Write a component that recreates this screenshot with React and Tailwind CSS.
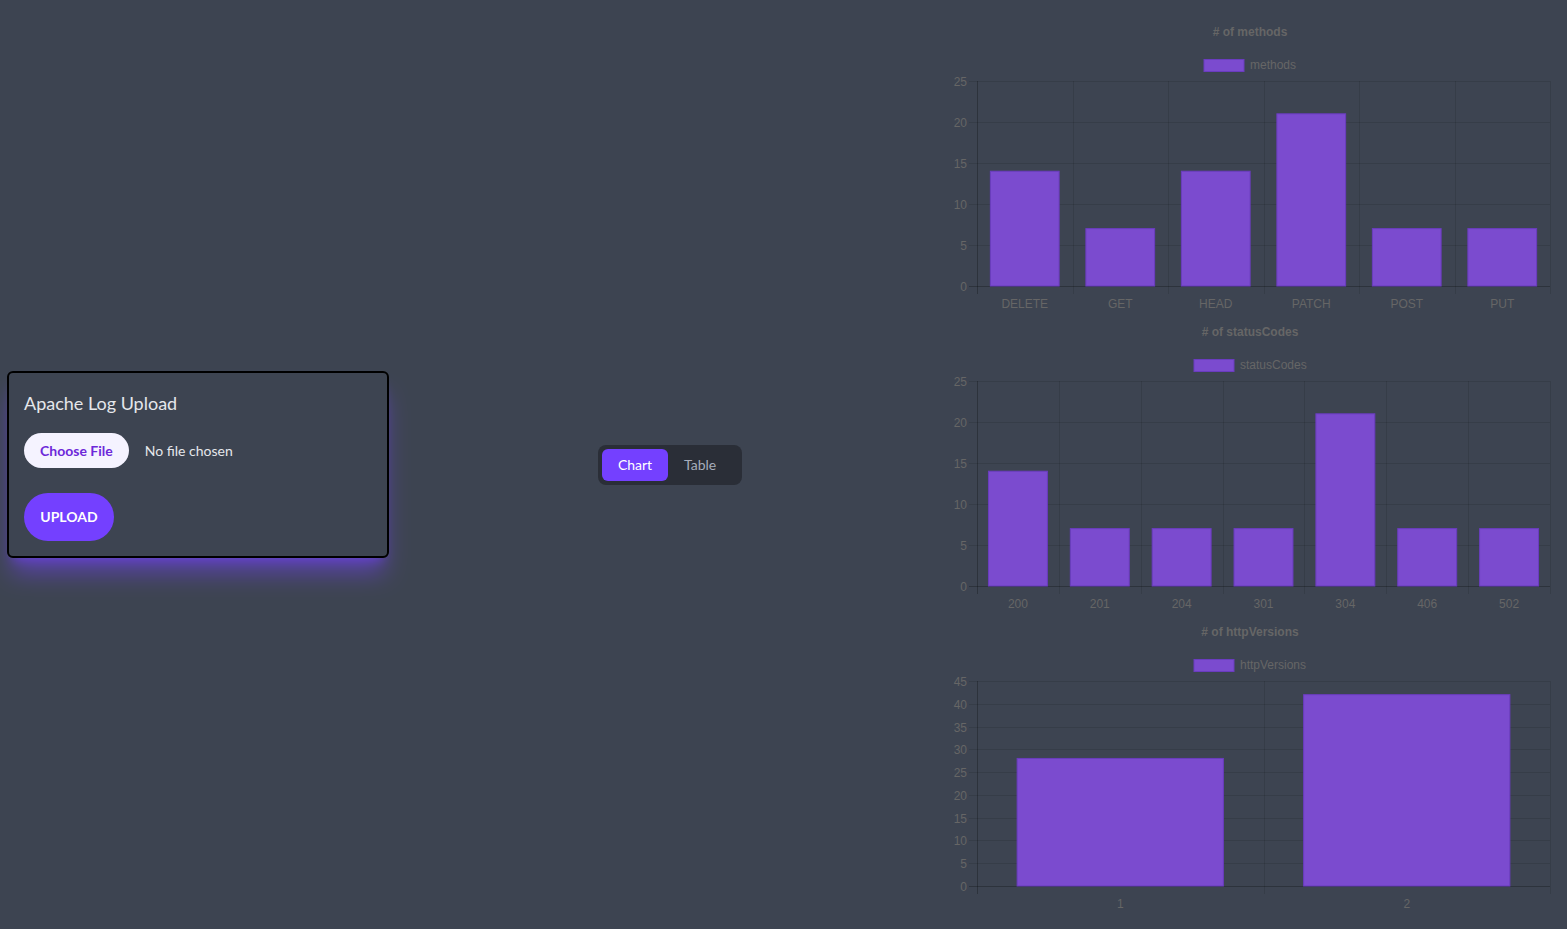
const charts = [
  { title: '# of methods', label: 'methods', labels: ['DELETE', 'GET', 'HEAD', 'PATCH', 'POST', 'PUT'], data: [14, 7, 14, 21, 7, 7], max: 25, legendX: 264 },
  { title: '# of statusCodes', label: 'statusCodes', labels: ['200', '201', '204', '301', '304', '406', '502'], data: [14, 7, 7, 7, 21, 7, 7], max: 25, legendX: 254 },
  { title: '# of httpVersions', label: 'httpVersions', labels: ['1', '2'], data: [28, 42], max: 45, legendX: 254 },
]

const L = 37
const R = 610
const TOP = 66
const BOTTOM = 271
const FONT = '"Liberation Sans", Arial, sans-serif'

function BarChart({ title, label, labels, data, max, legendX }) {
  const steps = max / 5
  const cat = (R - L) / labels.length
  const barW = cat * 0.72
  const y = (v) => BOTTOM - (v / max) * (BOTTOM - TOP)

  return (
    <svg width="620" height="300" className="block" style={{ fontFamily: FONT }}>
      <text x="310" y="21" textAnchor="middle" fontSize="12" fontWeight="bold" fill="#666">{title}</text>
      <rect x={legendX} y="44.5" width="40" height="12" fill="#7b4bcf" stroke="#6a3cbf" />
      <text x={legendX + 46} y="54" fontSize="12" fill="#666">{label}</text>

      {Array.from({ length: steps + 1 }, (_, i) => {
        const v = i * 5
        const yy = Math.round(y(v)) + 0.5
        return (
          <g key={v}>
            <line x1="29" x2={R} y1={yy} y2={yy} stroke={v === 0 ? 'rgba(0,0,0,0.25)' : 'rgba(0,0,0,0.1)'} />
            <text x="27" y={yy + 4} textAnchor="end" fontSize="12" fill="#666">{v}</text>
          </g>
        )
      })}

      {Array.from({ length: labels.length + 1 }, (_, i) => {
        const xx = Math.round(L + i * cat) + 0.5
        return (
          <line key={i} x1={xx} x2={xx} y1={TOP} y2={BOTTOM + 8} stroke={i === 0 ? 'rgba(0,0,0,0.25)' : 'rgba(0,0,0,0.1)'} />
        )
      })}

      {data.map((v, i) => {
        const cx = L + i * cat + cat / 2
        return (
          <g key={i}>
            <rect x={cx - barW / 2} y={y(v)} width={barW} height={BOTTOM - y(v)} fill="#7b4bcf" stroke="#6a3cbf" strokeWidth="1" />
            <text x={cx} y={293} textAnchor="middle" fontSize="12" fill="#666">{labels[i]}</text>
          </g>
        )
      })}
    </svg>
  )
}

export default function App() {
  return (
    <div className="min-h-screen bg-[#3d4451] flex items-center" style={{ fontFamily: 'Lato, "Noto Sans", sans-serif' }}>
      <div className="ml-[7px] w-[382px] h-[187px] border-2 border-black rounded-md px-[15px] pt-[18px] shadow-xl shadow-[#7440ff]/50">
        <h2 className="text-[18px] leading-6 text-[#e5e7eb]">Apache Log Upload</h2>
        <div className="flex items-center mt-[18px]">
          <button className="h-[35px] px-4 rounded-full bg-[#f5f3ff] text-[#6d28d9] text-sm font-bold">Choose File</button>
          <span className="ml-4 text-sm text-[#e5e7eb]">No file chosen</span>
        </div>
        <button className="mt-[25px] h-[48px] w-[90px] rounded-full bg-[#7440ff] text-white text-sm font-bold">UPLOAD</button>
      </div>

      <div className="ml-[209px] w-[144px] h-[40px] rounded-lg bg-[#2a2e37] flex items-center p-1">
        <button className="h-[32px] w-[66px] rounded-md bg-[#7440ff] text-white text-sm">Chart</button>
        <button className="h-[32px] px-4 text-sm text-[#a6adbb]">Table</button>
      </div>

      <div className="ml-[198px] w-[620px] flex flex-col">
        {charts.map((c) => (
          <BarChart key={c.label} {...c} />
        ))}
      </div>
    </div>
  )
}
